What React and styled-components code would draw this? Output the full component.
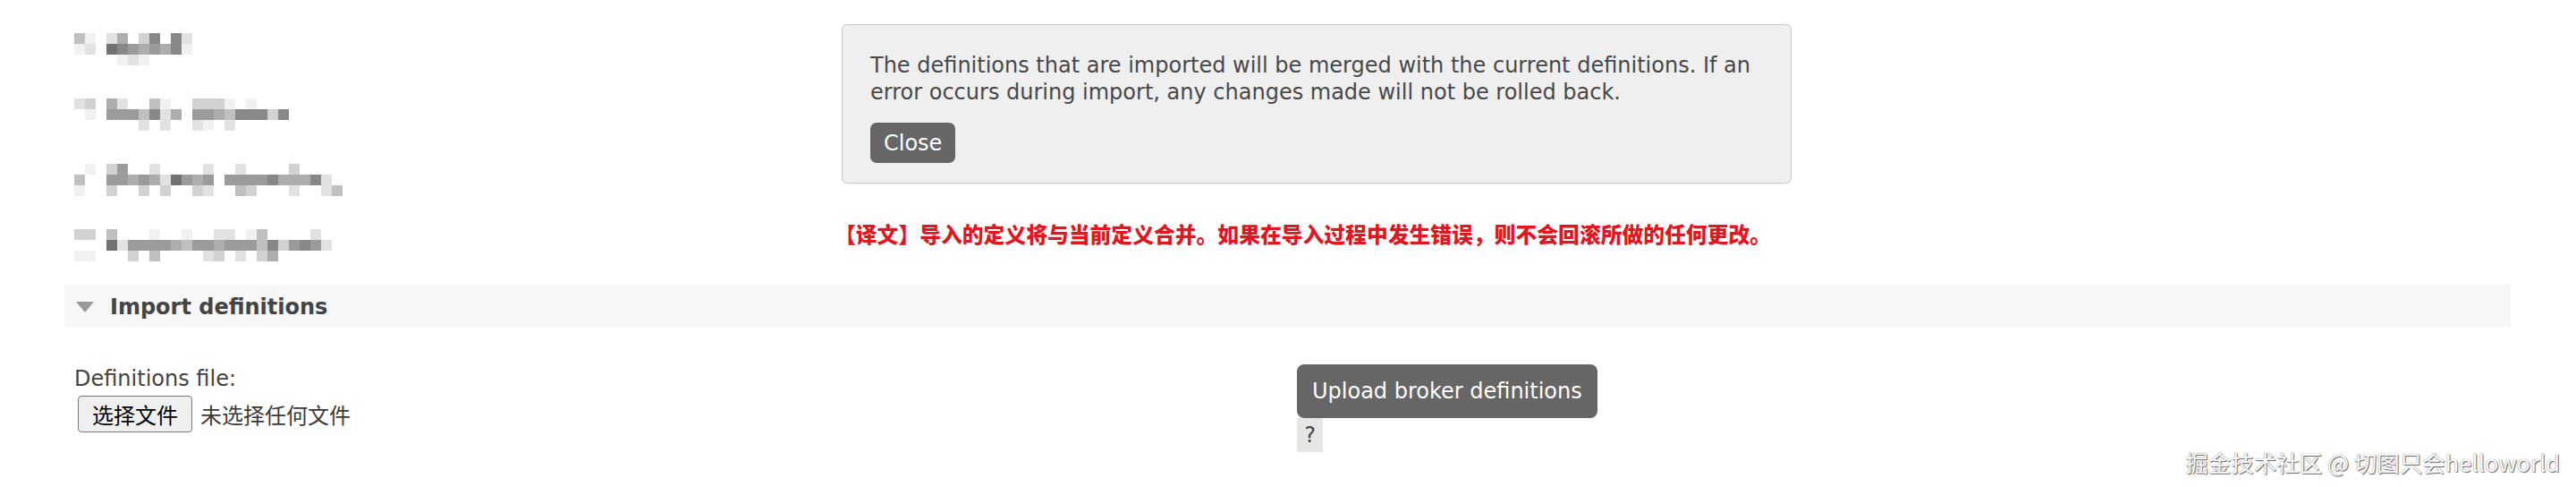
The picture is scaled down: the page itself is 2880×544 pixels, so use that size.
import React from "react";
import styled, { createGlobalStyle } from "styled-components";

const GlobalStyle = createGlobalStyle`
  body {
    margin: 0;
    background: #fff;
    font-family: "DejaVu Sans", "Noto Sans CJK SC", sans-serif;
    font-size: 24px;
    color: #444;
  }
`;

const Page = styled.div`
  position: relative;
  height: 544px;
  padding: 0 73px 0 72px;
  overflow: hidden;
`;

const Top = styled.div`
  display: flex;
  height: 318px;
`;

const NavList = styled.div`
  width: 861px;
  flex-shrink: 0;
  box-sizing: border-box;
  padding: 37px 0 0 11px;
  display: flex;
  flex-direction: column;
  gap: 37px;
`;

const Blur = styled.div`
  display: flex;
  flex-direction: column;
`;

const Band = styled.div`
  display: flex;
  height: 12px;
`;

const Cell = styled.span`
  width: 12px;
  height: 12px;
  background: ${(p) => p.$shade};
`;

const Aside = styled.div`
  padding: 27px 0 0 8px;
`;

const HelpBox = styled.div`
  width: 1062px;
  box-sizing: border-box;
  padding: 30px 31px 22px;
  background: #efefef;
  border: 1px solid #c9c9c9;
  border-radius: 6px;
  box-shadow: 0 1px 2px rgba(0, 0, 0, 0.06);
`;

const HelpText = styled.p`
  margin: 0 0 19px;
  line-height: 30px;
  color: #484848;
`;

const DarkButton = styled.button`
  font: inherit;
  font-size: 24px;
  color: #fff;
  background: #666;
  border: none;
  border-radius: ${(p) => (p.$big ? "8px" : "7px")};
  height: ${(p) => (p.$big ? "60px" : "45px")};
  padding: 0 ${(p) => (p.$big ? "17px" : "15px")};
  line-height: 1;
  cursor: pointer;
`;

const Note = styled.div`
  margin: 40px 0 0 -8px;
  font-family: "Noto Sans CJK SC", sans-serif;
  font-weight: 900;
  font-size: 23.8px;
  line-height: 32px;
  color: #e2161f;
  white-space: nowrap;
`;

const SectionBar = styled.div`
  display: flex;
  align-items: center;
  gap: 18px;
  height: 47px;
  padding: 3px 0 0 13px;
  box-sizing: border-box;
  background: #f7f7f7;
`;

const SectionTitle = styled.h2`
  margin: 0;
  font-size: 24px;
  font-weight: 700;
  color: #444;
`;

const Form = styled.div`
  display: grid;
  grid-template-columns: 1378px auto;
  padding-top: 42px;
`;

const Field = styled.div`
  display: flex;
  flex-direction: column;
  padding: 1px 0 0 11px;
`;

const Label = styled.label`
  line-height: 30px;
  color: #444;
`;

const FileRow = styled.div`
  display: flex;
  align-items: center;
  gap: 9px;
  margin: 4px 0 0 4px;
`;

const FileButton = styled.button`
  font-family: "Noto Sans CJK SC", sans-serif;
  font-size: 24px;
  color: #000;
  height: 41px;
  padding: 0 15px;
  background: #efefef;
  border: 1px solid #767676;
  border-radius: 4px;
  line-height: 1;
`;

const FileName = styled.span`
  font-family: "Noto Sans CJK SC", sans-serif;
  color: #3a3a3a;
`;

const Actions = styled.div`
  display: flex;
  flex-direction: column;
  align-items: flex-start;
`;

const HelpMark = styled.span`
  width: 29px;
  height: 38px;
  display: flex;
  align-items: center;
  justify-content: center;
  background: #e6e6e6;
  color: #444;
`;

const Watermark = styled.div`
  position: absolute;
  right: 18px;
  bottom: 10px;
  font-family: "Noto Sans CJK SC", "Noto Sans", sans-serif;
  font-size: 25.5px;
  color: #fff;
  text-shadow: 0 0 1px #555, 1px 1px 1px #666;
  white-space: nowrap;
`;

const shades = {
  "1": "#f1f1f1",
  "2": "#e2e2e2",
  "3": "#d2d2d2",
  "4": "#c0c0c0",
  "5": "#adadad",
  "6": "#9b9b9b",
  "7": "#888",
  "8": "#727272",
};

const navItems = [
  ["41.25.37.72", "12.87656571", "....121...."],
  ["23.52..41..3331.1....", ".1.6664725.665477737.", "......2.2..21.2......"],
  [".1.36..2....2..2....3....", "4..6656528656.6666755572.", "1..3..3.3..32..43...2..24"],
  ["33.4...1..1..22.14....2.", "...826666546656664736762", "11...3.4....23.2.35....."],
];

function Mosaic({ bands }) {
  return (
    <Blur>
      {bands.map((band, i) => (
        <Band key={i}>
          {band.split("").map((c, j) => (
            <Cell key={j} $shade={shades[c] || "transparent"} />
          ))}
        </Band>
      ))}
    </Blur>
  );
}

function Caret() {
  return (
    <svg width="20" height="12" viewBox="0 0 20 12">
      <path d="M0 0 H20 L10 12 Z" fill="#9a9a9a" />
    </svg>
  );
}

export default function App() {
  return (
    <Page>
      <GlobalStyle />
      <Top>
        <NavList>
          {navItems.map((bands, i) => (
            <Mosaic key={i} bands={bands} />
          ))}
        </NavList>
        <Aside>
          <HelpBox>
            <HelpText>
              The definitions that are imported will be merged with the current
              definitions. If an error occurs during import, any changes made will
              not be rolled back.
            </HelpText>
            <DarkButton>Close</DarkButton>
          </HelpBox>
          <Note>
            【译文】导入的定义将与当前定义合并。如果在导入过程中发生错误，则不会回滚所做的任何更改。
          </Note>
        </Aside>
      </Top>
      <SectionBar>
        <Caret />
        <SectionTitle>Import definitions</SectionTitle>
      </SectionBar>
      <Form>
        <Field>
          <Label>Definitions file:</Label>
          <FileRow>
            <FileButton>选择文件</FileButton>
            <FileName>未选择任何文件</FileName>
          </FileRow>
        </Field>
        <Actions>
          <DarkButton $big>Upload broker definitions</DarkButton>
          <HelpMark>?</HelpMark>
        </Actions>
      </Form>
      <Watermark>掘金技术社区 @ 切图只会helloworld</Watermark>
    </Page>
  );
}
